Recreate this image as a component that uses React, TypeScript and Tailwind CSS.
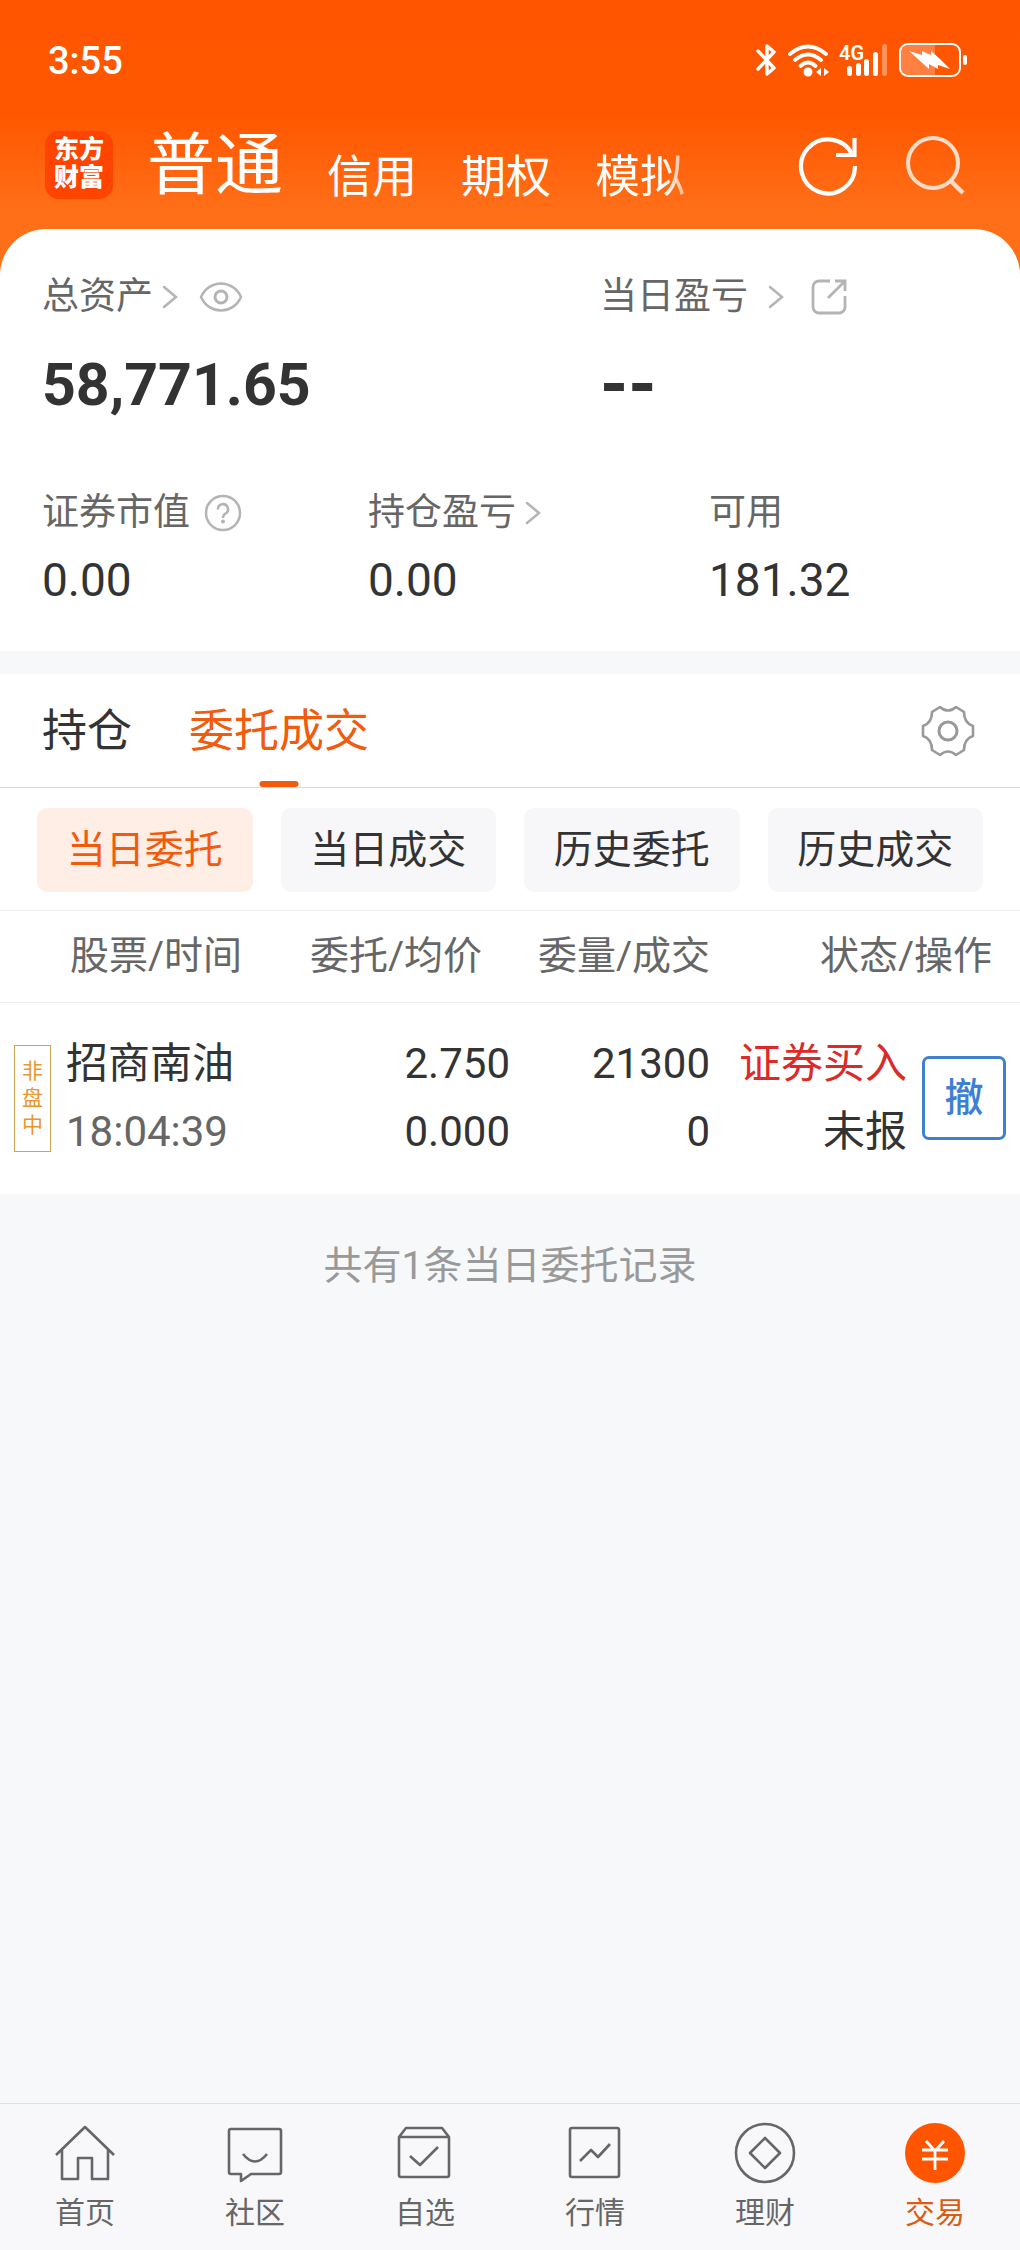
import type { ReactNode } from 'react';

function Chevron() {
  return (
    <svg width="16" height="24" viewBox="0 0 16 24" fill="none" stroke="#b4b4b4" strokeWidth="2.5" strokeLinecap="round" aria-hidden="true">
      <path d="M2 2 14 12 2 22" />
    </svg>
  );
}

function StatusBar() {
  return (
    <div className="flex h-[120px] items-center justify-between pr-[52px] pl-12 text-white">
      <time className="pt-0.5 text-[38px] leading-[48px] font-medium">3:55</time>
      <div className="flex items-center gap-2">
        <svg width="24" height="36" viewBox="0 0 24 36" fill="none" stroke="#fff" strokeWidth="3.4" strokeLinejoin="round" strokeLinecap="round" role="img" aria-label="蓝牙">
          <path d="M4 9 20 26 13 32V21M4 27 20 10 13 4V15" />
        </svg>
        <svg width="44" height="36" viewBox="0 0 44 36" fill="none" stroke="#fff" strokeWidth="3.8" strokeLinecap="round" role="img" aria-label="无线网络">
          <path d="M4 12Q22 -3 40 12M9 18Q22 7 35 18M14.500 24Q22 17 29.500 24" />
          <circle cx="22" cy="30" r="4.500" fill="#fff" stroke="none" />
          <path d="M30 30 35 26V34ZM43 30 38 26V34Z" fill="#fff" stroke="none" />
        </svg>
        <svg width="52" height="36" viewBox="0 0 52 36" fill="#fff" role="img" aria-label="4G 信号">
          <text x="1" y="18" fontSize="20" fontWeight="600" fontFamily="Roboto, sans-serif">4G</text>
          <rect x="9" y="24" width="5" height="10" rx="2.500" />
          <rect x="18" y="21" width="5" height="13" rx="2.500" />
          <rect x="26" y="17" width="5" height="17" rx="2.500" />
          <rect x="35" y="10" width="5" height="24" rx="2.500" />
          <rect x="44" y="2" width="5" height="32" rx="2.500" opacity=".35" />
        </svg>
        <svg width="70" height="36" viewBox="0 0 70 36" role="img" aria-label="电池充电中">
          <path d="M10 3H37V33H10A7 7 0 0 1 3 26V10A7 7 0 0 1 10 3Z" fill="#fff" opacity=".25" />
          <rect x="2" y="2" width="60" height="32" rx="8" fill="none" stroke="#fff" strokeWidth="2" />
          <rect x="65" y="13" width="4" height="10" rx="2" fill="#fff" />
          <path d="M11 9 24 13V9L33 13V9L42 17 52 27 40 23V27L31 22V27Z" fill="#fff" />
        </svg>
      </div>
    </div>
  );
}

function TopNav() {
  return (
    <header className="flex h-[109px] items-start pr-[55px] pl-[45px] text-white">
      <div className="mt-[11px] flex size-[68px] shrink-0 flex-col items-center justify-center rounded-[14px] bg-[#ff4400] pb-0.5 text-[25px] leading-7 font-black">
        <span>东方</span>
        <span>财富</span>
      </div>
      <nav className="mt-0.5 ml-[34px] flex items-end gap-11 text-[45px] leading-[65px] whitespace-nowrap" aria-label="账户类型">
        <a href="#normal" aria-current="page" className="text-[68px] leading-[88px]">普通</a>
        <a href="#credit">信用</a>
        <a href="#option">期权</a>
        <a href="#demo" className="[mask-image:linear-gradient(to_right,#000_78%,rgba(0,0,0,0.5)_100%)]">模拟</a>
      </nav>
      <div className="mt-[15px] ml-auto flex gap-[47px]">
        <button type="button" aria-label="刷新">
          <svg width="60" height="62" viewBox="0 0 60 62" fill="none" stroke="#fff" strokeWidth="4.200">
            <path d="M57 31A27 27 0 1 1 54 19" />
            <path d="M56.500 3V20H38" />
          </svg>
        </button>
        <button type="button" aria-label="搜索">
          <svg width="60" height="62" viewBox="0 0 60 62" fill="none" stroke="#ffdcc8" strokeWidth="4">
            <circle cx="28" cy="28" r="25" />
            <path d="M45 45 58 58" strokeWidth="4.500" />
          </svg>
        </button>
      </div>
    </header>
  );
}

function Metric({ label, value, children }: { label: string; value: string; children?: ReactNode }) {
  return (
    <div>
      <div className="flex h-10 items-center text-[37px] leading-10 text-[#666]">
        <span>{label}</span>
        {children}
      </div>
      <div className="mt-[21px] text-[46px] leading-[52px] text-[#333]">{value}</div>
    </div>
  );
}

function AssetCard() {
  return (
    <section className="rounded-t-[46px] bg-white px-[42px] pt-12 pb-[45px]">
      <div className="grid grid-cols-[558fr_378fr]">
        <div>
          <div className="flex h-10 items-center text-[37px] leading-10 text-[#666]">
            <a href="#assets" className="flex items-center gap-[9px]">总资产<Chevron /></a>
            <button type="button" aria-label="隐藏金额" className="ml-[21px]">
              <svg width="44" height="32" viewBox="0 0 44 32" fill="none" stroke="#b4b4b4" strokeWidth="2.500">
                <path d="M2 16C10 -2 34 -2 42 16C34 34 10 34 2 16Z" strokeLinejoin="round" />
                <circle cx="22" cy="16" r="6" strokeWidth="3" />
              </svg>
            </button>
          </div>
          <div className="mt-[38px] text-[59px] leading-[60px] font-bold text-[#333]">58,771.65</div>
        </div>
        <div>
          <div className="flex h-10 items-center text-[37px] leading-10 text-[#666]">
            <a href="#today" className="flex items-center gap-5">当日盈亏<Chevron /></a>
            <button type="button" aria-label="分享" className="ml-[27px]">
              <svg width="36" height="36" viewBox="0 0 36 36" fill="none" stroke="#b4b4b4" strokeWidth="2.800">
                <path d="M19 2H8A6 6 0 0 0 2 8V28A6 6 0 0 0 8 34H28A6 6 0 0 0 34 28V17" />
                <path d="M24 2H34V12M34 2 17 19" />
              </svg>
            </button>
          </div>
          <div className="mt-[38px] text-[72px] leading-[60px] font-bold text-[#333]">--</div>
        </div>
      </div>
      <div className="mt-[78px] grid grid-cols-[326fr_341fr_269fr]">
        <Metric label="证券市值" value="0.00">
          <button type="button" aria-label="说明" className="ml-[14px]">
            <svg width="38" height="38" viewBox="0 0 38 38" fill="none" stroke="#b4b4b4" strokeWidth="2.500">
              <circle cx="19" cy="19" r="17" />
              <path d="M14 15.500A5 5 0 1 1 21.500 19.500Q19 21 19 24" />
              <circle cx="19" cy="27.500" r="2" fill="#b4b4b4" stroke="none" />
            </svg>
          </button>
        </Metric>
        <Metric label="持仓盈亏" value="0.00">
          <span className="ml-[9px]"><Chevron /></span>
        </Metric>
        <Metric label="可用" value="181.32" />
      </div>
    </section>
  );
}

function OrderTabs() {
  return (
    <div className="flex h-[114px] items-stretch border-b border-[#dcdcdc] pr-[45px] pl-[42px] text-[45px] leading-[115px]">
      <button type="button" className="text-[#333]">持仓</button>
      <button type="button" aria-current="true" className="relative ml-[57px] text-[#f25a0d]">
        委托成交
        <span className="absolute bottom-0 left-1/2 h-1.5 w-[39px] -translate-x-1/2 rounded-full bg-[#f25a0d]" />
      </button>
      <button type="button" aria-label="设置" className="ml-auto">
        <svg width="54" height="54" viewBox="-1 -1 54 54" fill="none" stroke="#999" strokeWidth="2.600" strokeLinejoin="round">
          <path d="M34 2 42 7Q42 18 51 21V31Q42 34 42 45L34 50Q26 43 18 50L10 45Q10 34 1 31V21Q10 18 10 7L18 2Q26 9 34 2Z" />
          <circle cx="26" cy="26" r="9" strokeWidth="3" />
        </svg>
      </button>
    </div>
  );
}

function FilterChips() {
  return (
    <div className="grid grid-cols-4 gap-7 border-b border-[#f3f3f5] px-[37px] pt-5 pb-[18px] text-[39px] leading-[84px] text-[#333]">
      <button type="button" aria-pressed="true" className="rounded-[10px] bg-[#ffeee6] text-[#f25a0d]">当日委托</button>
      <button type="button" aria-pressed="false" className="rounded-[10px] bg-[#f7f7fa]">当日成交</button>
      <button type="button" aria-pressed="false" className="rounded-[10px] bg-[#f7f7fa]">历史委托</button>
      <button type="button" aria-pressed="false" className="rounded-[10px] bg-[#f7f7fa]">历史成交</button>
    </div>
  );
}

function OrderTable() {
  return (
    <table className="w-full table-fixed border-collapse text-right text-[#333]">
      <colgroup>
        <col className="w-[30%]" />
        <col className="w-[20%]" />
        <col className="w-[20%]" />
        <col className="w-[30%]" />
      </colgroup>
      <thead className="border-b border-[#ececec] text-[39px] leading-[91px] whitespace-nowrap text-[#666]">
        <tr>
          <th scope="col" className="p-0 pl-[70px] text-left font-normal">股票/时间</th>
          <th scope="col" className="p-0 pr-7 font-normal">委托/均价</th>
          <th scope="col" className="p-0 pr-1 font-normal">委量/成交</th>
          <th scope="col" className="p-0 pr-7 font-normal">状态/操作</th>
        </tr>
      </thead>
      <tbody className="text-[42px] leading-[68px] whitespace-nowrap">
        <tr className="h-[191px]">
          <td className="p-0">
            <div className="flex items-center gap-[15px] pl-[14px] text-left">
              <span className="flex h-[107px] w-[37px] flex-col items-center justify-center border border-[#cfa654] text-[21px] leading-[27px] text-[#e8962e]">
                <span>非</span>
                <span>盘</span>
                <span>中</span>
              </span>
              <div>
                <div>招商南油</div>
                <div className="text-[#666]">18:04:39</div>
              </div>
            </div>
          </td>
          <td className="p-0">
            <div>2.750</div>
            <div>0.000</div>
          </td>
          <td className="p-0 pr-1">
            <div>21300</div>
            <div>0</div>
          </td>
          <td className="p-0">
            <div className="flex items-center justify-end gap-[15px] pr-[14px]">
              <div>
                <div className="text-[#dc2a2a]">证券买入</div>
                <div>未报</div>
              </div>
              <button type="button" className="size-[84px] rounded-[7px] border-3 border-[#4080cc] text-[39px] leading-[76px] font-medium text-[#3c7fd4]">撤</button>
            </div>
          </td>
        </tr>
      </tbody>
    </table>
  );
}

const navItems: { label: string; href: string; icon: ReactNode }[] = [
  { label: '首页', href: '#home', icon: <path d="M1 32 30 4 59 32M7 27V56H23V35H37V56H53V27" /> },
  {
    label: '社区',
    href: '#community',
    icon: <path d="M6 6H54Q56 6 56 8V49Q56 51 54 51H26L16 58V51H6Q4 51 4 49V8Q4 6 6 6ZM18 31Q30 46 42 31" />,
  },
  {
    label: '自选',
    href: '#watch',
    icon: <path d="M4 14 11 5H47L54 14V52Q54 54 52 54H6Q4 54 4 52V14H54M15 33 25 42 43 24" />,
  },
  {
    label: '行情',
    href: '#market',
    icon: <path d="M7 5H52Q54 5 54 7V52Q54 54 52 54H7Q5 54 5 52V7Q5 5 7 5ZM15 38 26 27 33 34 45 21" />,
  },
  {
    label: '理财',
    href: '#wealth',
    icon: (
      <>
        <circle cx="30" cy="30" r="29" />
        <path d="M30 15 45 30 30 45 15 30Z" />
      </>
    ),
  },
  {
    label: '交易',
    href: '#trade',
    icon: (
      <>
        <circle cx="30" cy="30" r="30" fill="#ff5500" stroke="none" />
        <path d="M21 18 30 28 39 18M30 28V47M17 27H43M17 36H43" stroke="#fff" strokeWidth="2.800" />
      </>
    ),
  },
];

function BottomNav() {
  return (
    <nav className="grid grid-cols-6 border-t border-[#e0e0e3] bg-[#f8f8fb] pt-[19px] pb-[15px]" aria-label="主导航">
      {navItems.map((item) => (
        <a
          key={item.label}
          href={item.href}
          aria-current={item.label === '交易' ? 'page' : undefined}
          className="flex flex-col items-center text-[30px] leading-[44px] text-[#666] aria-[current=page]:text-[#dc5a14]"
        >
          <svg width="60" height="60" viewBox="0 0 60 60" className="mb-2 overflow-visible" fill="none" stroke="#666" strokeWidth="2.600" strokeLinejoin="round" aria-hidden="true">
            {item.icon}
          </svg>
          {item.label}
        </a>
      ))}
    </nav>
  );
}

export default function App() {
  return (
    <div className="flex min-h-screen flex-col bg-[#f6f8fa] font-[Roboto,'Noto_Sans_CJK_SC',sans-serif]">
      <div className="bg-[linear-gradient(to_bottom,#ff5500_0px,#ff5700_115px,#ff6f18_210px)]">
        <StatusBar />
        <TopNav />
        <AssetCard />
      </div>
      <main className="mt-[23px] grow">
        <div className="bg-white">
          <OrderTabs />
          <FilterChips />
          <OrderTable />
        </div>
        <p className="pt-[46px] text-center text-[39px] leading-[52px] text-[#999]">共有1条当日委托记录</p>
      </main>
      <BottomNav />
    </div>
  );
}
